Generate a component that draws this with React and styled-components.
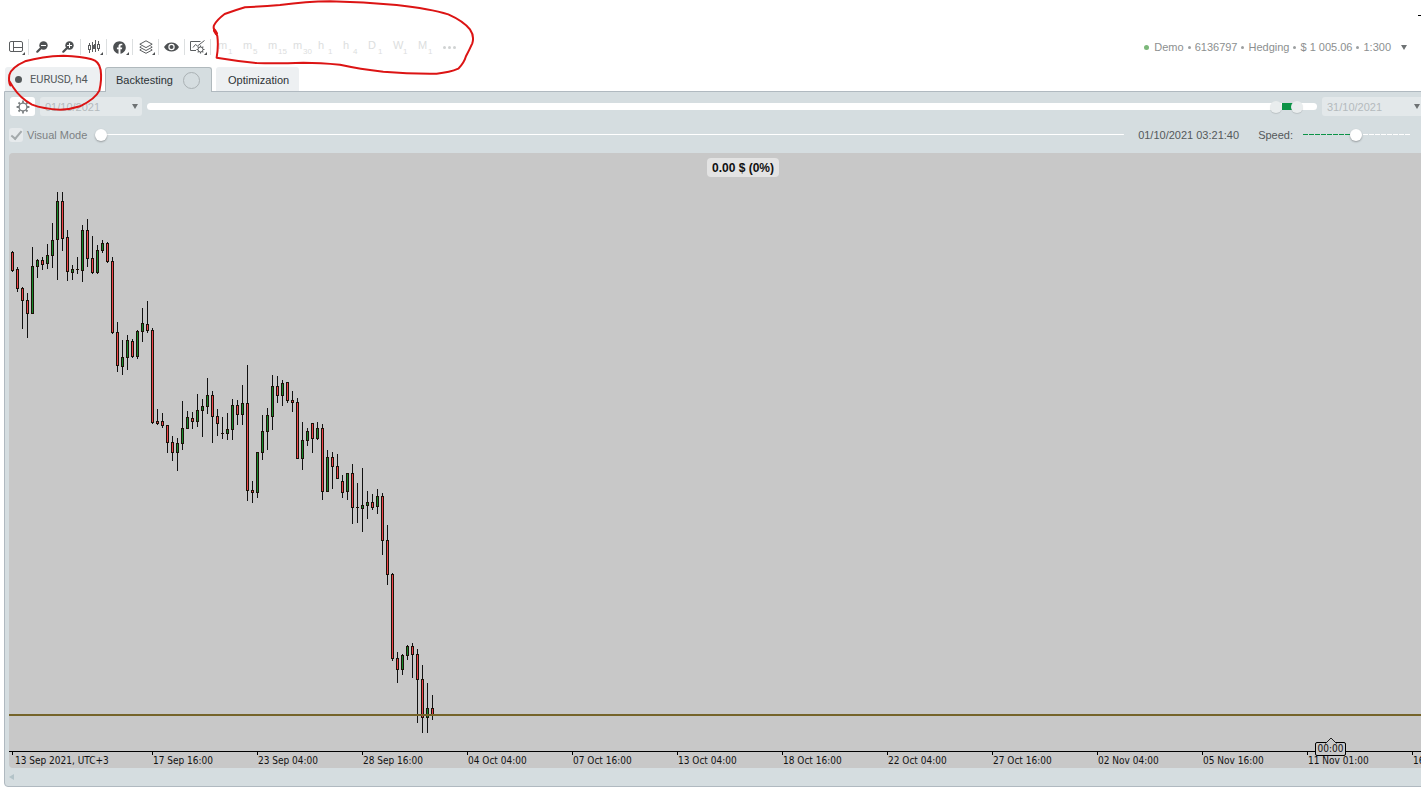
import { useState } from 'react'
import styled, { createGlobalStyle, css } from 'styled-components'
import { FaFacebook } from 'react-icons/fa'

// [high, low, bodyTop, bodyBottom, direction], one candle every 5px
const CANDLES = [
    [251, 272, 252, 270, 'r'], [267, 292, 269, 288, 'r'], [287, 329, 288, 300, 'r'],
    [293, 338, 300, 313, 'r'], [247, 314, 266, 313, 'g'], [259, 278, 260, 266, 'g'],
    [257, 270, 260, 264, 'r'], [244, 269, 255, 263, 'g'], [223, 268, 240, 255, 'g'],
    [192, 280, 201, 239, 'g'], [192, 251, 201, 238, 'r'], [230, 281, 237, 271, 'r'],
    [265, 280, 269, 272, 'g'], [257, 274, 269, 269, 'g'], [225, 282, 230, 270, 'g'],
    [219, 267, 230, 258, 'r'], [236, 274, 258, 272, 'r'], [245, 274, 250, 272, 'g'],
    [240, 253, 243, 250, 'g'], [242, 263, 243, 261, 'r'], [257, 334, 261, 332, 'r'],
    [322, 372, 332, 365, 'r'], [340, 375, 357, 366, 'g'], [335, 370, 340, 357, 'g'],
    [339, 358, 341, 356, 'r'], [330, 359, 331, 356, 'g'], [308, 342, 323, 331, 'g'],
    [301, 333, 324, 330, 'r'], [328, 424, 330, 422, 'r'], [409, 425, 421, 423, 'r'],
    [413, 428, 421, 425, 'r'], [425, 453, 425, 442, 'r'], [436, 461, 442, 452, 'r'],
    [438, 471, 443, 452, 'g'], [401, 450, 428, 443, 'g'], [411, 429, 417, 428, 'g'],
    [412, 429, 418, 421, 'r'], [394, 427, 410, 421, 'g'], [399, 437, 406, 410, 'g'],
    [378, 414, 395, 406, 'g'], [391, 443, 395, 416, 'r'], [409, 436, 416, 423, 'r'],
    [417, 439, 433, 433, 'g'], [413, 440, 429, 433, 'g'], [399, 440, 405, 429, 'g'],
    [400, 425, 405, 414, 'r'], [385, 425, 403, 414, 'g'], [365, 501, 403, 490, 'r'],
    [481, 503, 490, 492, 'r'], [452, 498, 452, 492, 'g'], [415, 460, 431, 452, 'g'],
    [408, 450, 415, 431, 'g'], [375, 430, 386, 416, 'g'], [376, 403, 386, 395, 'r'],
    [380, 406, 383, 395, 'g'], [382, 403, 382, 400, 'r'], [391, 412, 400, 402, 'r'],
    [398, 459, 402, 458, 'r'], [422, 470, 440, 458, 'g'], [428, 446, 431, 440, 'g'],
    [423, 453, 423, 438, 'r'], [422, 440, 428, 438, 'g'], [424, 500, 428, 491, 'r'],
    [450, 492, 457, 491, 'g'], [452, 489, 457, 466, 'r'], [454, 479, 466, 478, 'r'],
    [475, 498, 481, 492, 'r'], [473, 500, 473, 491, 'g'], [464, 524, 473, 507, 'r'],
    [483, 523, 507, 507, 'g'], [468, 532, 505, 508, 'g'], [491, 519, 502, 505, 'g'],
    [494, 510, 502, 507, 'r'], [489, 514, 496, 506, 'g'], [493, 555, 496, 540, 'r'],
    [525, 585, 540, 574, 'r'], [573, 661, 574, 658, 'r'], [652, 683, 658, 669, 'r'],
    [654, 675, 655, 669, 'g'], [645, 660, 646, 655, 'g'], [643, 678, 646, 654, 'r'],
    [649, 723, 654, 679, 'r'], [665, 733, 679, 717, 'r'], [683, 733, 708, 717, 'g'],
    [695, 720, 708, 714, 'r'],
]

const DATES = [
    '13 Sep 2021, UTC+3', '17 Sep 16:00', '23 Sep 04:00', '28 Sep 16:00', '04 Oct 04:00',
    '07 Oct 16:00', '13 Oct 04:00', '18 Oct 16:00', '22 Oct 04:00', '27 Oct 16:00',
    '02 Nov 04:00', '05 Nov 16:00', '11 Nov 01:00', '16 Nov 13:00',
]

const TIMEFRAMES = [
    ['m', '1'], ['m', '5'], ['m', '15'], ['m', '30'], ['h', '1'], ['h', '4'],
    ['D', '1'], ['W', '1'], ['M', '1'],
]

const LayoutIcon = () => (
    <svg width="14" height="12" viewBox="0 0 14 12" fill="none" stroke="#5a5d5f">
        <rect x="0.5" y="0.5" width="13" height="10" rx="1.5" />
        <path d="M4.500 0.500v10M4.500 6.500h9" />
    </svg>
)

const ZoomIcon = ({ plus }) => (
    <svg width="12" height="12" viewBox="0 0 12 12" fill="none">
        <circle cx="7.500" cy="4.500" r="4.200" fill="#4d5052" />
        <path d="M4.800 7.200L1.300 10.700" stroke="#4d5052" strokeWidth="2.200" strokeLinecap="round" />
        <path d={plus ? 'M5 4.500h5M7.500 2v5' : 'M5 4.500h5'} stroke="#fff" />
    </svg>
)

const CandlesIcon = () => (
    <svg width="12" height="14" viewBox="0 0 12 14" shapeRendering="crispEdges">
        <g fill="#5a5d5f">
            <path d="M1 3h1v10H1zM0 5h3v5H0zM4 2h1v10H4zM7 0h1v12H7zM10 1h1v10h-1zM9 4h3v5H9z" />
            <path d="M4 5h2v4H4zM6 4h2v5H6z" />
        </g>
        <path d="M1 6h1v3H1zM10 5h1v3h-1z" fill="#fff" />
    </svg>
)

const LayersIcon = () => (
    <svg width="14" height="14" viewBox="0 0 14 14" fill="none" stroke="#5a5d5f" strokeLinejoin="round">
        <path d="M7 0.800l6.200 3.400L7 7.600 0.800 4.200z" />
        <path d="M2.300 6.300L0.800 7.200 7 10.500l6.200-3.300-1.500-0.900" />
        <path d="M2.300 9.200L0.800 10 7 13.300l6.200-3.300-1.500-0.800" />
    </svg>
)

const EyeIcon = () => (
    <svg width="15" height="10" viewBox="0 0 15 10">
        <path d="M0 5C2 1.600 4.500 0.400 7.500 0.400S13 1.600 15 5c-2 3.400-4.500 4.600-7.500 4.600S2 8.400 0 5z" fill="#4d5052" />
        <circle cx="7.500" cy="5" r="3.200" fill="#fff" />
        <circle cx="7.500" cy="5" r="2" fill="#4d5052" />
    </svg>
)

const ChartSettingsIcon = () => (
    <svg width="16" height="14" viewBox="0 0 16 14" fill="none" stroke="#5a5d5f">
        <path d="M6 10.500H0.500V1.500h10" />
        <path d="M3 7.500l2.500-3 2 1.500L14.500 0.500" />
        <circle cx="10.500" cy="9.500" r="2.500" />
        <path
            strokeWidth="1.200"
            d="M10.500 5.500V7M10.500 12v1.500M6.500 9.500H8M13 9.500h1.500M7.700 6.700l1 1M12.300 11.300l1 1M13.300 6.700l-1 1M8.700 11.300l-1 1"
        />
    </svg>
)

const GearIcon = () => (
    <svg width="14" height="14" viewBox="0 0 14 14" fill="none" stroke="#7c8183">
        <circle cx="7" cy="7" r="3.900" strokeWidth="1.400" />
        <path
            strokeWidth="1.800"
            d="M7 0.600v2.400M7 11v2.400M0.600 7H3M11 7h2.400M2.500 2.500L4 4M10 10l1.500 1.500M11.500 2.500L10 4M4 10l-1.500 1.500"
        />
    </svg>
)

const TOOLS = [
    { label: 'Layout', icon: <LayoutIcon />, menu: true, divider: true },
    { label: 'Zoom out', icon: <ZoomIcon /> },
    { label: 'Zoom in', icon: <ZoomIcon plus />, divider: true },
    { label: 'Chart type', icon: <CandlesIcon />, menu: true, divider: true },
    { label: 'Share', icon: <FaFacebook size={13} />, menu: true, divider: true },
    { label: 'Layers', icon: <LayersIcon />, menu: true, divider: true },
    { label: 'Visibility', icon: <EyeIcon />, divider: true },
    { label: 'Chart settings', icon: <ChartSettingsIcon />, menu: true, divider: true },
]

const Candles = () => (
    <Plot aria-label="EURUSD candles">
        {CANDLES.map(([high, low, top, bottom, dir], i) => {
            const x = 3 + i * 5
            return (
                <g key={i} shapeRendering="crispEdges">
                    <rect x={x} y={high - 153} width="1" height={low - high} fill="#111" />
                    <rect x={x - 1} y={top - 153} width="3" height={bottom - top + 1} fill="#1c1208" />
                    {bottom - top > 1 && (
                        <rect
                            x={x}
                            y={top - 152}
                            width="1"
                            height={bottom - top - 1}
                            fill={dir === 'g' ? '#148a2c' : '#f0424a'}
                        />
                    )}
                </g>
            )
        })}
        <rect x="0" y="561" width="100%" height="2" fill="#75642a" />
    </Plot>
)

const App = () => {
    const [from, setFrom] = useState(97)
    const [to, setTo] = useState(98.8)
    const [progress, setProgress] = useState(0)
    const [speed, setSpeed] = useState(49)
    const [visual, setVisual] = useState(true)

    return (
        <Page>
            <GlobalStyle />

            <WindowBar>
                <Minimize aria-label="Minimize" />
            </WindowBar>

            <Toolbar>
                {TOOLS.map((tool) => (
                    <Tool key={tool.label} aria-label={tool.label} $menu={tool.menu} $divider={tool.divider}>
                        {tool.icon}
                    </Tool>
                ))}
                <Timeframes>
                    {TIMEFRAMES.map(([unit, count]) => (
                        <Timeframe key={unit + count} disabled>
                            <span>{unit}</span>
                            <small>{count}</small>
                        </Timeframe>
                    ))}
                    <More aria-label="More timeframes" disabled>
                        <Dot /><Dot /><Dot />
                    </More>
                </Timeframes>
                <Account>
                    <Online />
                    <span>Demo</span><Sep />
                    <span>6136797</span><Sep />
                    <span>Hedging</span><Sep />
                    <span>$ 1 005.06</span><Sep />
                    <span>1:300</span>
                    <Caret />
                </Account>
            </Toolbar>

            <Tabs>
                <SymbolTab><Status />EURUSD, h4</SymbolTab>
                <ActiveTab>Backtesting<Ring /></ActiveTab>
                <Tab>Optimization</Tab>
            </Tabs>

            <Panel>
                <RangeRow>
                    <GearButton aria-label="Settings"><GearIcon /></GearButton>
                    <DateField>
                        <DateSelect aria-label="Start date" disabled><option>01/10/2021</option></DateSelect>
                        <Caret />
                    </DateField>
                    <Period>
                        <PeriodFill style={{ left: `${from}%`, right: `calc(${100 - to}% + 9px)` }} />
                        <PeriodInput
                            type="range" step="0.1" aria-label="Period start" value={from}
                            onChange={(e) => setFrom(+e.target.value)}
                        />
                        <PeriodInput
                            type="range" step="0.1" aria-label="Period end" value={to}
                            onChange={(e) => setTo(+e.target.value)}
                        />
                    </Period>
                    <DateField>
                        <DateSelect aria-label="End date" disabled><option>31/10/2021</option></DateSelect>
                        <Caret />
                    </DateField>
                </RangeRow>

                <VisualRow>
                    <CheckLabel>
                        <Check type="checkbox" checked={visual} onChange={() => setVisual(!visual)} />
                        Visual Mode
                    </CheckLabel>
                    <Progress
                        type="range" aria-label="Progress" value={progress}
                        onChange={(e) => setProgress(+e.target.value)}
                    />
                    <Time>01/10/2021 03:21:40</Time>
                    <SpeedLabel htmlFor="speed">Speed:</SpeedLabel>
                    <Speed id="speed" type="range" value={speed} onChange={(e) => setSpeed(+e.target.value)} />
                </VisualRow>

                <Chart>
                    <Profit>0.00 $ (0%)</Profit>
                    <Candles />
                    <Axis>
                        {DATES.map((date, i) => (
                            <Mark key={date} $first={i === 0}>{date}</Mark>
                        ))}
                    </Axis>
                    <Countdown>
                        <svg width="12" height="7" viewBox="0 0 12 7">
                            <path d="M0.500 6.500L6 1l5.500 5.500" fill="#c8c8c8" stroke="#222" />
                        </svg>
                        <span>00:00</span>
                    </Countdown>
                </Chart>

                <ScrollBar>
                    <ScrollButton aria-label="Scroll left" />
                </ScrollBar>
            </Panel>

            {/* red pen marks */}
            <Marker viewBox="0 0 1421 790" aria-hidden="true">
                <g transform="scale(0.3333)" fill="none" stroke="#dc1414" strokeWidth="6" strokeLinejoin="round" strokeLinecap="round">
                    <path d="M31 256Q25 246 28 225Q34 202 75 184Q125 169 190 167Q245 169 275 178Q297 183 302 210Q306 240 298 272Q286 297 240 319Q210 329 180 329Q130 327 96 314Q60 294 39 261L27 242" />
                    <path d="M650 101Q638 90 642 76Q650 60 674 42Q705 31 735 22Q790 19 840 15Q920 5 990 4Q1090 6 1190 15Q1290 26 1345 43Q1390 63 1410 88Q1424 108 1417 130Q1408 150 1398 169Q1392 190 1375 206Q1350 217 1310 221Q1230 222 1150 215Q1080 207 1020 194Q960 188 910 188Q830 191 770 189Q710 183 650 173Q656 138 652 108L641 84" />
                    <path d="M644 92L649 100" strokeWidth="10" />
                </g>
            </Marker>
        </Page>
    )
}

export default App

const GlobalStyle = createGlobalStyle`
    * {
        box-sizing: border-box;
    }

    body {
        margin: 0;
        background: #fff;
        overflow: hidden;
    }

    button, input, select {
        font: inherit;
        margin: 0;
        padding: 0;
        border: 0;
        background: none;
        color: inherit;
        appearance: none;
    }
`;

const Page = styled.div`
    position: relative;
    overflow: hidden;
    font: 11px/14px "Liberation Sans", Arial, sans-serif;
    color: #54595b;
`;

const WindowBar = styled.div`
    display: flex;
    justify-content: flex-end;
    height: 34px;
    padding-top: 15px;
`;

const Minimize = styled.button`
    width: 3px;
    height: 1px;
    background: #000;
`;

const Toolbar = styled.div`
    display: flex;
    align-items: center;
    height: 26px;
    padding-left: 3px;
`;

const Tool = styled.button`
    position: relative;
    display: flex;
    align-items: center;
    justify-content: center;
    width: 26px;
    height: 16px;
    color: #4d5052;
    border-right: 1px solid ${({ $divider }) => ($divider ? '#dcdfe0' : 'transparent')};

    ${({ $menu }) => $menu && css`
        &::after {
            content: "";
            position: absolute;
            right: 3px;
            bottom: 0;
            border-left: 3px solid transparent;
            border-bottom: 3px solid #4d5052;
        }
    `}
`;

const Timeframes = styled.div`
    display: flex;
    align-items: center;
    padding-left: 7px;
`;

const Timeframe = styled.button`
    display: grid;
    grid-template-columns: 10px 15px;
    width: 25px;
    height: 18px;
    text-align: left;
    color: #dcdede;

    small {
        font-size: 8px;
        line-height: 8px;
        align-self: end;
    }
`;

const More = styled.button`
    display: flex;
    gap: 2px;
`;

const Dot = styled.span`
    width: 3px;
    height: 3px;
    border-radius: 50%;
    background: #d0d3d3;
`;

const Account = styled.div`
    display: flex;
    align-items: center;
    margin-left: auto;
    padding-right: 14px;
    color: #8c8f90;
`;

const Online = styled.span`
    width: 5px;
    height: 5px;
    margin-right: 5px;
    border-radius: 50%;
    background: #7cb87a;
`;

const Sep = styled.span`
    width: 3px;
    height: 3px;
    margin: 0 4px;
    border-radius: 50%;
    background: #9c9fa0;
`;

const Caret = styled.span`
    margin-left: 10px;
    border: 3px solid transparent;
    border-top: 5px solid #6e7274;
    border-bottom: 0;
    pointer-events: none;
`;

const Tabs = styled.div`
    display: flex;
    gap: 4px;
    height: 25px;
    margin-top: 7px;
    padding-left: 5px;
    position: relative;
    z-index: 1;
`;

const Tab = styled.button`
    display: flex;
    align-items: center;
    height: 24px;
    padding: 1px 10px 0 12px;
    border-radius: 3px 3px 0 0;
    background: #edf0f2;
    color: #2c3235;
`;

const SymbolTab = styled(Tab)`
    width: 96px;
    padding-left: 10px;
    font-family: Roboto, "Liberation Sans", sans-serif;
    color: #54595b;
`;

const ActiveTab = styled(Tab)`
    justify-content: space-between;
    width: 107px;
    height: 25px;
    padding: 0 11px 0 10px;
    border: 1px solid #b0b9bd;
    border-bottom: 0;
    background: #d5dde0;
`;

const Status = styled.span`
    width: 7px;
    height: 7px;
    margin-right: 8px;
    border-radius: 50%;
    background: #54595b;
`;

const Ring = styled.span`
    width: 17px;
    height: 17px;
    border: 1px solid #aab1b4;
    border-radius: 50%;
`;

const Panel = styled.div`
    margin: -1px -4px 0 4px;
    padding-left: 4px;
    background: #d5dde0;
    border: 1px solid #b0b9c0;
    border-radius: 0 0 0 4px;
`;

const thumb = css`
    appearance: none;
    width: 12px;
    height: 12px;
    border: 0;
    border-radius: 50%;
    background: #fff;
    box-shadow: 0 1px 2px rgba(0, 0, 0, 0.3);
`;

const RangeRow = styled.div`
    display: flex;
    align-items: center;
    gap: 5px;
    height: 19px;
    margin: 5px 0 0 1px;
`;

const GearButton = styled.button`
    display: flex;
    align-items: center;
    justify-content: center;
    width: 25px;
    height: 19px;
    border-radius: 3px;
    background: #fff;
`;

const DateField = styled.div`
    display: flex;
    align-items: center;
    width: 102px;
    height: 19px;
    padding-right: 4px;
    border-radius: 3px;
    background: #e3e8ea;
`;

const DateSelect = styled.select`
    flex: 1;
    padding-left: 5px;
    color: #b4babd;
    opacity: 1;
`;

const Period = styled.div`
    position: relative;
    flex: 1;
    height: 7px;
    border-radius: 4px;
    background: #fff;
`;

const PeriodFill = styled.span`
    position: absolute;
    top: 0;
    bottom: 0;
    background: #0c9347;
`;

const PeriodInput = styled.input`
    position: absolute;
    top: -3px;
    left: 0;
    width: 100%;
    height: 13px;
    pointer-events: none;

    &::-webkit-slider-thumb {
        ${thumb}
        background: #e9edee;
        box-shadow: 0 1px 1px rgba(0, 0, 0, 0.12);
        pointer-events: auto;
    }
`;

const VisualRow = styled.div`
    display: flex;
    align-items: center;
    height: 37px;
    padding-right: 13px;
`;

const CheckLabel = styled.label`
    display: flex;
    align-items: center;
    gap: 4px;
    color: #7d8183;
`;

const Check = styled.input`
    width: 14px;
    height: 14px;
    border-radius: 3px;
    background: #e6eaec;
    display: grid;
    place-items: center;

    &:checked::after {
        content: "";
        width: 9px;
        height: 4px;
        border: solid #a4aaac;
        border-width: 0 0 2px 2px;
        transform: translateY(-1px) rotate(-50deg);
    }
`;

const Progress = styled.input`
    flex: 1;
    height: 14px;
    margin: 0 14px 0 8px;
    background: linear-gradient(#fff, #fff) center / 100% 1px no-repeat;

    &::-webkit-slider-thumb {
        ${thumb}
    }
`;

const Time = styled.time`
    width: 106px;
`;

const SpeedLabel = styled.label`
    margin-left: 14px;
`;

const Speed = styled.input`
    width: 108px;
    height: 14px;
    margin-left: 10px;
    background:
        repeating-linear-gradient(90deg, transparent 0 5px, #d5dde0 5px 6px),
        linear-gradient(90deg, #0c9347 50%, #fff 50%) center / 100% 1px no-repeat;

    &::-webkit-slider-thumb {
        ${thumb}
    }
`;

const Chart = styled.div`
    position: relative;
    overflow: hidden;
    border-radius: 4px 0 0 4px;
    background: #c8c8c8;
    color: #111;
`;

const Plot = styled.svg`
    display: block;
    width: 100%;
    height: 598px;
`;

const Profit = styled.output`
    position: absolute;
    top: 5px;
    left: 698px;
    padding: 3px 5px 2px;
    border-radius: 4px;
    background: #e3e3e3;
    font-weight: bold;
    font-size: 12px;
`;

const Axis = styled.div`
    display: flex;
    height: 17px;
    padding-left: 3px;
    border-top: 1px solid #000;
    font: 10px/12px "DejaVu Sans Condensed", "DejaVu Sans", sans-serif;
    font-stretch: condensed;
`;

const Mark = styled.span`
    flex: none;
    width: ${({ $first }) => ($first ? 140 : 105)}px;
    padding-left: ${({ $first }) => ($first ? 3 : 1)}px;
    padding-top: 3px;
    background: linear-gradient(#000, #000) left top / 1px 3px no-repeat;
    white-space: nowrap;
`;

const Countdown = styled.div`
    position: absolute;
    right: 78px;
    bottom: 12px;
    display: flex;
    flex-direction: column;
    align-items: center;
    width: 31px;
    font: 10px/12px "DejaVu Sans Condensed", "DejaVu Sans", sans-serif;
    text-align: center;

    svg {
        position: relative;
        z-index: 1;
        margin-bottom: -2px;
    }

    span {
        width: 100%;
        border: 1px solid #000;
        border-radius: 2px;
        background: #c8c8c8;
    }
`;

const ScrollBar = styled.div`
    display: flex;
    align-items: center;
    height: 18px;
`;

const ScrollButton = styled.button`
    border: 3px solid transparent;
    border-right: 5px solid #b3c3c8;
    border-left: 0;
`;

const Marker = styled.svg`
    position: absolute;
    top: 0;
    left: 0;
    width: 1421px;
    height: 790px;
    pointer-events: none;
    z-index: 2;
`;
